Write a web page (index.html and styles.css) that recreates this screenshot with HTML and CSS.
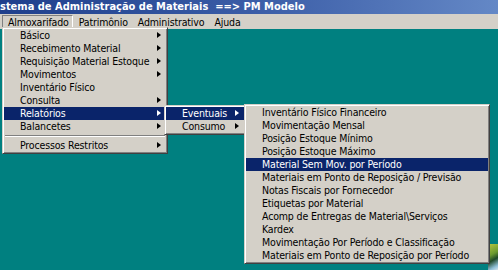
FILE: index.html
```html
<!DOCTYPE html>
<html lang="pt">
<head>
<meta charset="utf-8">
<title>Sistema de Administração de Materiais</title>
<link rel="stylesheet" href="styles.css">
</head>
<body>
<div class="window">
  <div class="titlebar"><span class="title">stema de Administração de Materiais  ==&gt; PM Modelo</span></div>
  <div class="menubar">
    <span class="mb-item pressed">Almoxarifado</span>
    <span class="mb-item">Patrimônio</span>
    <span class="mb-item">Administrativo</span>
    <span class="mb-item">Ajuda</span>
  </div>
  <div class="desktop">
    <div class="wallpaper"></div>
  </div>

  <ul class="menu menu-main">
    <li class="sub">Básico</li>
    <li class="sub">Recebimento Material</li>
    <li class="sub">Requisição Material Estoque</li>
    <li class="sub">Movimentos</li>
    <li>Inventário Físico</li>
    <li class="sub">Consulta</li>
    <li class="sub active">Relatórios</li>
    <li class="sub">Balancetes</li>
    <li class="sep"></li>
    <li class="sub">Processos Restritos</li>
  </ul>

  <ul class="menu menu-sub1">
    <li class="sub active">Eventuais</li>
    <li class="sub">Consumo</li>
  </ul>

  <ul class="menu menu-sub2">
    <li>Inventário Físico Financeiro</li>
    <li>Movimentação Mensal</li>
    <li>Posição Estoque Mínimo</li>
    <li>Posição Estoque Máximo</li>
    <li class="active">Material Sem Mov. por Período</li>
    <li>Materiais em Ponto de Reposição / Previsão</li>
    <li>Notas Fiscais por Fornecedor</li>
    <li>Etiquetas por Material</li>
    <li>Acomp de Entregas de Material\Serviços</li>
    <li>Kardex</li>
    <li>Movimentação Por Período e Classificação</li>
    <li>Materiais em Ponto de Reposição por Período</li>
  </ul>
</div>
</body>
</html>
```

FILE: styles.css
```css
* { box-sizing: border-box; }
html, body {
  margin: 0;
  padding: 0;
  width: 498px;
  height: 270px;
  overflow: hidden;
}
body {
  font-family: "DejaVu Sans Condensed", "DejaVu Sans", sans-serif;
  font-stretch: condensed;
  font-size: 10.5px;
  letter-spacing: -0.15px;
  color: #000;
  background: #008080;
}
.window {
  position: relative;
  width: 498px;
  height: 270px;
  display: flex;
  flex-direction: column;
}
.titlebar {
  height: 14px;
  flex: none;
  background: linear-gradient(to right, #1f3f8c 0%, #3a5ca6 50%, #6488c6 100%);
  color: #fff;
  font-size: 11px;
  letter-spacing: 0;
  font-weight: bold;
  line-height: 13px;
  white-space: pre;
  overflow: hidden;
}
.menubar {
  height: 15px;
  flex: none;
  background: #d4d0c8;
  display: flex;
  align-items: stretch;
  padding: 1px 0 0 2px;
}
.mb-item {
  padding: 0 3px 0 5px;
  line-height: 12px;
  border: 1px solid transparent;
  white-space: nowrap;
}
.mb-item.pressed {
  border-color: #808080 #fff #fff #808080;
}
.desktop {
  flex: 1;
  background: #008080;
  position: relative;
}
.wallpaper {
  position: absolute;
  right: 0;
  bottom: 0;
  width: 10px;
  height: 26px;
  background: linear-gradient(150deg, #b8c840 0%, #6a9a30 40%, #1f4a2a 60%, #8fc0d8 85%, #d8e8f0 100%);
}
.menu {
  position: absolute;
  margin: 0;
  padding: 1px;
  list-style: none;
  background: #d4d0c8;
  border: 1px solid;
  border-color: #d4d0c8 #404040 #404040 #d4d0c8;
  box-shadow: inset 1px 1px 0 #fff, inset -1px -1px 0 #808080;
}
.menu li {
  position: relative;
  height: 13px;
  line-height: 13px;
  padding-left: 16px;
  white-space: nowrap;
}
.menu li.active {
  background: #0a246a;
  color: #fff;
}
.menu li.sub::after {
  content: "";
  position: absolute;
  right: 5px;
  top: 3px;
  width: 0;
  height: 0;
  border-style: solid;
  border-width: 3.5px 0 3.5px 4px;
  border-color: transparent transparent transparent #000;
}
.menu li.sub.active::after {
  border-left-color: #fff;
}
.menu li.sep {
  height: 6px;
  padding: 0;
  margin: 0 1px;
}
.menu li.sep::before {
  content: "";
  position: absolute;
  left: 0;
  right: 0;
  top: 2px;
  height: 1px;
  background: #808080;
  border-bottom: 1px solid #fff;
  box-sizing: content-box;
}
.menu-main {
  left: 2px;
  top: 27px;
  width: 166px;
}
.menu-sub1 {
  left: 164px;
  top: 105px;
  width: 82px;
}
.menu-sub2 {
  left: 244px;
  top: 104px;
  width: 246px;
}
```
